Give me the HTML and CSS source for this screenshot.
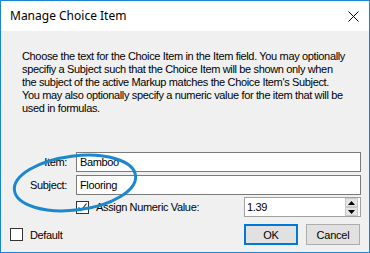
FILE: index.html
```html
<!DOCTYPE html>
<html>
<head>
<meta charset="utf-8">
<link rel="stylesheet" href="styles.css">
</head>
<body>
<div class="window">
  <div class="titlebar">
    <span class="title">Manage Choice Item</span>
    <svg class="close" width="11" height="11" viewBox="0 0 11 11"><path d="M0.5 0.5 L10.5 10.5 M10.5 0.5 L0.5 10.5" stroke="#000" stroke-width="1" fill="none"/></svg>
  </div>
  <div class="content">
    <p class="desc">Choose the text for the Choice Item in the Item field. You may optionally<br>specifiy a Subject such that the Choice Item will be shown only when<br>the subject of the active Markup matches the Choice Item's Subject.<br>You may also optionally specify a numeric value for the item that will be<br>used in formulas.</p>
    <div class="form">
      <label class="lbl">Item:</label>
      <div class="field">Bamboo</div>
      <label class="lbl">Subject:</label>
      <div class="field">Flooring</div>
      <div></div>
      <div class="numrow">
        <span class="check checked"><svg width="11" height="11" viewBox="0 0 11 11"><path d="M1.5 5.5 L4 8.5 L9.5 1.5" stroke="#333" stroke-width="1.2" fill="none"/></svg></span>
        <span class="chklabel">Assign Numeric Value:</span>
        <div class="numbox">
          <span class="numval">1.39</span>
          <div class="spin">
            <div class="spinbtn"><svg width="7" height="4" viewBox="0 0 7 4"><path d="M3.5 0 L7 4 L0 4 Z" fill="#000"/></svg></div>
            <div class="spinbtn"><svg width="7" height="4" viewBox="0 0 7 4"><path d="M0 0 L7 0 L3.5 4 Z" fill="#000"/></svg></div>
          </div>
        </div>
      </div>
    </div>
    <div class="bottom">
      <div class="default"><span class="check"></span><span class="chklabel">Default</span></div>
      <div class="buttons">
        <button class="btn ok">OK</button>
        <button class="btn">Cancel</button>
      </div>
    </div>
  </div>
  <svg class="annot" width="370" height="253" viewBox="0 0 370 253"><ellipse cx="75" cy="183" rx="61" ry="27" transform="rotate(-7 75 183)" fill="none" stroke="#1b87cf" stroke-width="3"/></svg>
</div>
</body>
</html>
```

FILE: styles.css
```css
html, body { margin: 0; padding: 0; }
body { font-family: "Liberation Sans", Arial, sans-serif; font-size: 11px; color: #000; letter-spacing: -0.35px; }
.window {
  position: relative;
  width: 370px; height: 253px;
  box-sizing: border-box;
  border: 1px solid #1883d7;
  display: flex; flex-direction: column;
  background: #f0f0f0;
}
.titlebar {
  height: 30px; background: #fff;
  display: flex; align-items: center; justify-content: space-between;
  padding: 0 10px 0 9px;
}
.title { font-family: "Noto Sans", "Open Sans", sans-serif; font-size: 12px; letter-spacing: 0; margin-top: -1px; }
.close { display: block; }
.content { flex: 1; display: flex; flex-direction: column; }
.desc { margin: 19px 0 0 21px; line-height: 13px; font-size: 11px; white-space: nowrap; }
.form {
  margin-top: 37px;
  display: grid;
  grid-template-columns: 66px 1fr;
  column-gap: 9px;
  row-gap: 3px;
  padding-right: 8px;
  align-items: center;
}
.lbl { text-align: right; }
.field {
  height: 20px; box-sizing: border-box;
  border: 1px solid #7a7a7a; background: #fff;
  padding: 0 3px; line-height: 18px;
}
.numrow { display: flex; align-items: center; margin-top: -1px; }
.check {
  width: 13px; height: 13px; box-sizing: border-box;
  border: 1px solid #333; background: #fff;
  display: inline-flex; align-items: center; justify-content: center;
}
.chklabel { margin-left: 7px; }
.numbox {
  margin-left: auto;
  width: 117px; height: 20px; box-sizing: border-box;
  border: 1px solid #a0a0a0; background: #fff;
  display: flex; align-items: center; justify-content: space-between;
  padding: 0 2px 0 2px;
}
.spin { display: flex; flex-direction: column; gap: 0; }
.spinbtn {
  width: 13px; height: 9px; box-sizing: border-box;
  background: #e5e5e5; border: 1px solid #c8c8c8;
  display: flex; align-items: center; justify-content: center;
}
.bottom {
  margin-top: auto;
  display: flex; justify-content: space-between; align-items: center;
  padding: 0 9px 7px 9px;
}
.default { display: flex; align-items: center; }
.buttons { display: flex; gap: 8px; }
.btn {
  font-family: "Liberation Sans", Arial, sans-serif; font-size: 11px; letter-spacing: -0.2px;
  width: 54px; height: 21px; box-sizing: border-box;
  background: #e1e1e1; border: 1px solid #adadad; padding: 0; color: #000;
}
.ok { border: 2px solid #0078d7; }
.annot { position: absolute; left: -1px; top: -1px; pointer-events: none; }
```
